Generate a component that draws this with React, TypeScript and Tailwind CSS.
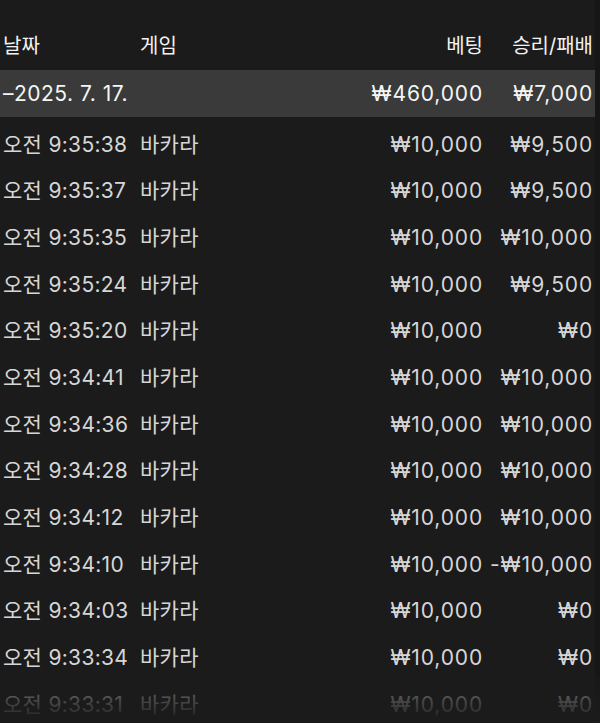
const rows: [string, string, string][] = [
  ["오전 9:35:38", "₩10,000", "₩9,500"],
  ["오전 9:35:37", "₩10,000", "₩9,500"],
  ["오전 9:35:35", "₩10,000", "₩10,000"],
  ["오전 9:35:24", "₩10,000", "₩9,500"],
  ["오전 9:35:20", "₩10,000", "₩0"],
  ["오전 9:34:41", "₩10,000", "₩10,000"],
  ["오전 9:34:36", "₩10,000", "₩10,000"],
  ["오전 9:34:28", "₩10,000", "₩10,000"],
  ["오전 9:34:12", "₩10,000", "₩10,000"],
  ["오전 9:34:10", "₩10,000", "-₩10,000"],
  ["오전 9:34:03", "₩10,000", "₩0"],
  ["오전 9:33:34", "₩10,000", "₩0"],
  ["오전 9:33:31", "₩10,000", "₩0"],
];

export default function App() {
  return (
    <div
      className="relative h-[723px] w-[600px] overflow-hidden bg-[#1b1b1b] flex"
      style={{ fontFamily: 'Inter, "Noto Sans CJK KR", sans-serif' }}
    >
      <div className="w-[595px] shrink-0">
        <div className="h-[70px] flex items-end pb-[9px] text-[20px] text-[#f2f2f2]">
          <span className="w-[140px] pl-[3px]">날짜</span>
          <span className="flex-1">게임</span>
          <span className="w-[140px] text-right">베팅</span>
          <span className="w-[112px] text-right pr-[2px]">승리/패배</span>
        </div>

        <div className="h-[47px] flex items-center bg-[#3a3a3a] text-[21px] text-[#f5f5f5]">
          <span className="flex-1 pl-[3px] tracking-[0.5px]">–2025. 7. 17.</span>
          <span className="w-[140px] text-right tracking-[0.85px]">₩460,000</span>
          <span className="w-[112px] text-right pr-[2px] tracking-[0.85px]">₩7,000</span>
        </div>

        <div className="pt-[4px]">
          {rows.map(([time, bet, result], i) => (
            <div
              key={i}
              className="h-[46.7px] flex items-center text-[21px] text-[#d6d6d6]"
            >
              <span className="w-[140px] pl-[3px] whitespace-nowrap tracking-[0.3px]">{time}</span>
              <span className="flex-1 tracking-[0.3px]">바카라</span>
              <span className="w-[140px] text-right tracking-[0.85px]">{bet}</span>
              <span className="w-[112px] text-right pr-[2px] whitespace-nowrap tracking-[0.85px]">{result}</span>
            </div>
          ))}
        </div>
      </div>
      <div className="flex-1 bg-[#161616]" />

      {/* fade at the bottom edge */}
      <div className="pointer-events-none absolute bottom-0 left-0 right-0 h-[46px] bg-gradient-to-b from-[#1b1b1b]/40 via-[#1b1b1b]/75 to-[#1b1b1b]" />
    </div>
  );
}
